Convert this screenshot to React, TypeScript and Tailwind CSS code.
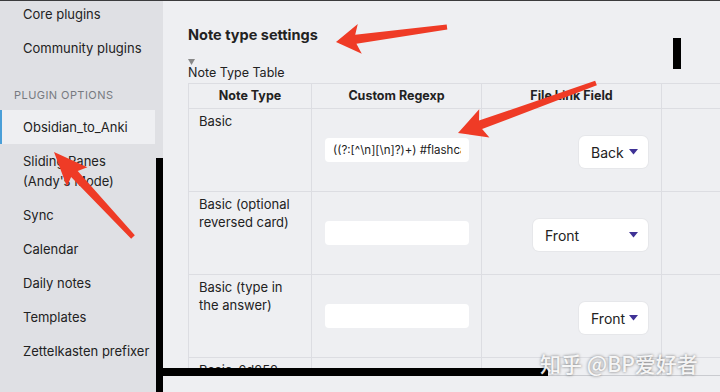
import React from 'react'
import { X } from 'lucide-react'

type Pt = [number, number]

// tapered annotation arrow, tail -> tip
const arrowPoints = (tail: Pt, tip: Pt, headLen: number, headHalf: number, w0: number, w1: number) => {
  const dx = tail[0] - tip[0]
  const dy = tail[1] - tip[1]
  const len = Math.hypot(dx, dy)
  const ux = dx / len
  const uy = dy / len
  const px = -uy
  const py = ux
  const base: Pt = [tip[0] + ux * headLen, tip[1] + uy * headLen]
  const neck: Pt = [tip[0] + ux * (headLen - 4), tip[1] + uy * (headLen - 4)]
  const pts: Pt[] = [
    tip,
    [base[0] + px * headHalf, base[1] + py * headHalf],
    [neck[0] + px * w1, neck[1] + py * w1],
    [tail[0] + px * w0, tail[1] + py * w0],
    [tail[0] - px * w0, tail[1] - py * w0],
    [neck[0] - px * w1, neck[1] - py * w1],
    [base[0] - px * headHalf, base[1] - py * headHalf],
  ]
  return pts.map((p) => p.join(',')).join(' ')
}

const arrows = [
  { tail: [447, 27] as Pt, tip: [336, 42] as Pt, hl: 24, hh: 15 },
  { tail: [596, 83] as Pt, tip: [458, 133] as Pt, hl: 28, hh: 15 },
  { tail: [133, 237] as Pt, tip: [54, 152] as Pt, hl: 34, hh: 14 },
]

const sidebarTop = ['Core plugins', 'Community plugins']
const pluginItems = ['Sync', 'Calendar', 'Daily notes', 'Templates', 'Zettelkasten prefixer']

const rows = [
  { name: 'Basic', regexp: '((?:[^\\n][\\n]?)+) #flashcard', field: 'Back', w: 'w-[69px]' },
  { name: 'Basic (optional reversed card)', regexp: '', field: 'Front', w: 'w-[115px]' },
  { name: 'Basic (type in the answer)', regexp: '', field: 'Front', w: 'w-[69px]' },
  { name: 'Basic-6d252', regexp: '', field: '', w: '' },
]

const Dropdown = ({ label, w }: { label: string; w: string }) => (
  <div className={`${w} h-[32px] bg-white rounded-[6px] flex items-center justify-between pl-[12px] pr-[10px] text-[14px] text-[#222] shadow-[0_0_0_1px_rgba(0,0,0,0.03)]`}>
    <span>{label}</span>
    <svg width="9" height="6" viewBox="0 0 9 6"><path d="M0 0h9L4.5 5.5z" fill="#3f3296" /></svg>
  </div>
)

export default function App() {
  return (
    <div className="relative w-[720px] h-[392px] overflow-hidden bg-[#3b3b3d] pt-[1px] pr-[6px] font-['Inter',sans-serif] flex">
      {/* sidebar */}
      <div className="w-[163px] shrink-0 bg-[#dfe0e4] pr-[8px] text-[13px] text-[#222]">
        <div className="-mt-[4px]">
          {sidebarTop.map((t) => (
            <div key={t} className="pl-[23px] py-[7px] leading-[20px]">{t}</div>
          ))}
          <div className="pl-[14px] pt-[22px] pb-[6px] leading-[17px] text-[11px] tracking-[0.04em] text-[#777a80] uppercase">Plugin options</div>
          <div className="pl-[21px] py-[7px] leading-[20px] bg-[#eeeff2] border-l-[2px] border-[#4a9fd8]">Obsidian_to_Anki</div>
          <div className="pl-[23px] py-[7px] leading-[20px]">Sliding Panes<br />(Andy's Mode)</div>
          {pluginItems.map((t) => (
            <div key={t} className="pl-[23px] py-[7px] leading-[20px]">{t}</div>
          ))}
        </div>
      </div>

      {/* modal */}
      <div className="relative flex-1 bg-[#eeeff2] rounded-tr-[6px] text-[#222] flex flex-col">
        <button className="absolute top-[11px] right-[14px] text-[#555]"><X size={15} strokeWidth={2} /></button>
        <div className="h-[375px] shrink-0 border-b border-[#c9cbd0] pl-[25px] pr-[41px] overflow-hidden">
          <div className="pt-[24px] text-[14.5px] leading-[20px] font-bold">Note type settings</div>
          <div className="mt-[12px] h-[8px] flex items-end">
            <svg width="7" height="6" viewBox="0 0 7 6"><path d="M0 0h7L3.5 6z" fill="#888" /></svg>
          </div>
          <div className="text-[12.5px] leading-[16px] mb-[2px]">Note Type Table</div>
          <div className="overflow-hidden">
            <table className="table-fixed border-collapse w-[545px] text-[13px]">
              <colgroup>
                <col className="w-[123px]" />
                <col className="w-[170px]" />
                <col className="w-[180px]" />
                <col className="w-[72px]" />
              </colgroup>
              <thead>
                <tr className="h-[25px]">
                  {['Note Type', 'Custom Regexp', 'File Link Field', ''].map((h, i) => (
                    <th key={i} className="border border-[#dcdde2] font-bold text-[12.5px] text-center">{h}</th>
                  ))}
                </tr>
              </thead>
              <tbody>
                {rows.map((r) => (
                  <tr key={r.name} className="h-[83px]">
                    <td className="border border-[#dcdde2] align-top pl-[10px] pr-[6px] pt-[3px] leading-[18px]">{r.name}</td>
                    <td className="border border-[#dcdde2] align-middle pl-[13px] pr-[12px]">
                      <input
                        readOnly
                        value={r.regexp}
                        className="w-[144px] h-[24px] bg-white rounded-[4px] px-[8px] text-[11.5px] text-[#222] outline-none"
                      />
                    </td>
                    <td className="border border-[#dcdde2] align-middle pr-[13px]">
                      {r.field && (
                        <div className="flex justify-end pt-[4px]">
                          <Dropdown label={r.field} w={r.w} />
                        </div>
                      )}
                    </td>
                    <td className="border border-[#dcdde2]"></td>
                  </tr>
                ))}
              </tbody>
            </table>
          </div>
        </div>
      </div>

      {/* black redaction bars */}
      <div className="absolute left-[156px] top-[158px] w-[7px] h-[234px] bg-black" />
      <div className="absolute left-[156px] top-[368px] w-[392px] h-[8px] bg-black" />
      <div className="absolute left-[673px] top-[38px] w-[8px] h-[31px] bg-black" />

      {/* watermark */}
      <div className="absolute left-[540px] top-[349px] text-[21px] leading-[28px] font-medium text-white/90 font-['Noto_Sans_CJK_SC',sans-serif] [text-shadow:0_0_3px_rgba(0,0,0,0.55)]">
        知乎 @BP爱好者
      </div>

      {/* red annotation arrows */}
      <svg className="absolute left-0 top-0 pointer-events-none" width="720" height="392">
        {arrows.map((a, i) => (
          <polygon key={i} points={arrowPoints(a.tail, a.tip, a.hl, a.hh, 2.5, 4.5)} fill="#ef3b26" strokeLinejoin="round" />
        ))}
      </svg>
    </div>
  )
}
